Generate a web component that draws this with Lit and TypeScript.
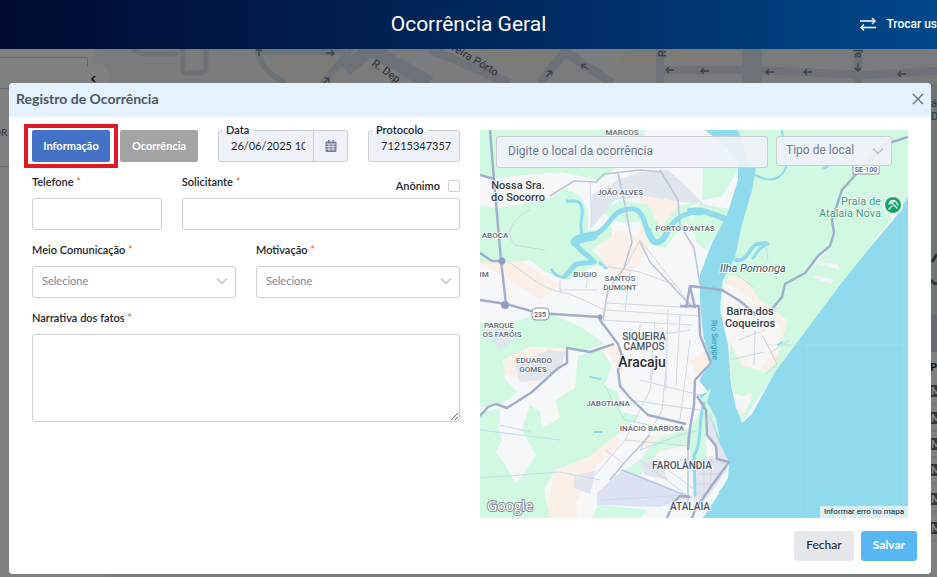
import { LitElement, html, svg, css } from "lit";
import { customElement } from "lit/decorators.js";

type Label = { t: string; x: number; y: number; c: string };

const labels: Label[] = [
  { t: "MARCOS", x: 622, y: 135, c: "small" },
  { t: "JOÃO ALVES", x: 620, y: 195, c: "small" },
  { t: "PORTO D'ANTAS", x: 685, y: 231, c: "small" },
  { t: "ABOCA", x: 495, y: 238, c: "small" },
  { t: "IM", x: 484, y: 277, c: "small" },
  { t: "BUGIO", x: 585, y: 277, c: "small" },
  { t: "SANTOS", x: 620, y: 281, c: "small" },
  { t: "DUMONT", x: 620, y: 290, c: "small" },
  { t: "PARQUE", x: 499, y: 328, c: "small" },
  { t: "OS FARÓIS", x: 502, y: 337, c: "small" },
  { t: "EDUARDO", x: 534, y: 363, c: "small" },
  { t: "GOMES", x: 533, y: 372, c: "small" },
  { t: "JABOTIANA", x: 608, y: 406, c: "small" },
  { t: "INÁCIO BARBOSA", x: 652, y: 431, c: "small" },
  { t: "SIQUEIRA", x: 644, y: 340, c: "medium" },
  { t: "CAMPOS", x: 644, y: 350, c: "medium" },
  { t: "FAROLÂNDIA", x: 682, y: 469, c: "medium" },
  { t: "ATALAIA", x: 690, y: 510, c: "medium" },
  { t: "Nossa Sra.", x: 518, y: 189, c: "town" },
  { t: "do Socorro", x: 518, y: 201, c: "town" },
  { t: "Barra dos", x: 750, y: 315, c: "town" },
  { t: "Coqueiros", x: 750, y: 327, c: "town" },
  { t: "Aracaju", x: 642, y: 367, c: "city" },
  { t: "Ilha Pomonga", x: 753, y: 272, c: "isle" },
  { t: "Praia de", x: 861, y: 205, c: "beach" },
  { t: "Atalaia Nova", x: 850, y: 217, c: "beach" },
];

const chevron = html`<svg class="chevron" viewBox="0 0 12 12" aria-hidden="true">
  <path d="M1.5 4 L6 8.5 L10.5 4" fill="none" stroke="currentColor" stroke-width="1.5" stroke-linecap="round" stroke-linejoin="round" />
</svg>`;

@customElement("city-map")
class CityMap extends LitElement {
  static styles = css`
    :host { display: block; }
    svg { display: block; width: 100%; height: auto; }
    text { font-family: Roboto, sans-serif; text-anchor: middle; fill: #4d5662; stroke: #fff; stroke-width: 2px; stroke-opacity: 0.7; paint-order: stroke; }
    .small { font-size: 8px; font-weight: 500; fill: #626b77; }
    .medium { font-size: 10px; font-weight: 500; }
    .town { font-size: 11px; font-weight: 500; fill: #353a42; }
    .city { font-size: 14px; font-weight: 500; fill: #2a2e34; }
    .isle { font-size: 11px; font-style: italic; font-weight: 400; }
    .beach { font-size: 11px; fill: #3d9c80; }
    .river-name { font-size: 8px; fill: #2f94ae; stroke: none; }
    .shield { font-size: 7px; font-weight: 500; }
    .credit { font-size: 8px; fill: #111; stroke: none; }
    .brand { font-family: "Open Sans", sans-serif; font-size: 14px; font-weight: 500; fill: #fff; stroke: #8b9298; stroke-width: 2px; stroke-opacity: 1; }
    .green { fill: #d1f8e1; }
    .sand { fill: #faf0e7; }
    .urban { fill: #e1e5ee; }
    .water { fill: #90daee; }
    .stream { fill: none; stroke: #90daee; stroke-linecap: round; stroke-linejoin: round; }
    .main { fill: none; stroke: #a0aecb; stroke-width: 2.4; stroke-linejoin: round; }
    .mid { fill: none; stroke: #bcc8d9; stroke-width: 1.6; stroke-linejoin: round; }
    .minor { fill: none; stroke: #cfd9e5; stroke-width: 1; }
    .creek { fill: none; stroke: #b4e4ea; stroke-width: 1; }
  `;
  render() {
    return html`<svg viewBox="480 130 428 388" role="img" aria-label="Mapa de Aracaju">
      <rect x="480" y="130" width="428" height="388" fill="#f6f7f9" />
      <path class="sand" d="M500 258 L520 260 L560 285 L540 300 L480 262Z M600 240 L620 230 L650 240 L640 265 L615 280 L600 262Z M640 190 L670 180 L680 200 L665 250 L640 240Z M500 372 C505 350 530 346 566 347 L560 366 L530 385 L510 375Z M612 346 L625 348 L622 375 L606 350Z M555 470 C575 455 600 450 615 432 L620 445 L590 472 L576 505 L578 518 L545 518Z M640 438 L690 430 L690 445 L650 455Z M690 360 L705 350 L710 365 L698 377Z"/>
      <path class="green" d="M480 130 L645 130 L640 150 L600 180 L560 172 L492 178 L480 176Z"/>
      <path class="green" d="M480 206 L500 208 L552 198 L566 188 L580 196 L588 210 L588 230 L612 226 L612 236 L592 250 L604 262 L590 268 L568 280 L545 272 L530 260 L508 262 L480 262Z"/>
      <path class="green" d="M600 212 L620 200 L648 205 L660 228 L678 206 L722 196 L738 170 L720 140 L703 168 L702 204 L735 210 L705 250 L694 240 L686 222 L664 248 L650 244 L640 222 L618 222Z"/>
      <path class="green" d="M480 322 C505 326 530 318 540 312 C565 318 590 330 604 344 L588 350 L566 348 L530 347 L503 360 L505 380 L518 392 L500 405 L480 407Z"/>
      <path class="green" d="M578 356 L602 350 L612 366 L604 386 L618 392 L622 412 L640 416 L628 426 L610 440 L590 456 L556 470 L544 490 L550 518 L480 518 L480 412 L500 408 L500 424 L522 430 L530 405 L540 412 L542 428 L560 418 L556 400 L575 388Z"/>
      <path class="green" d="M612 478 L640 460 L655 440 L690 428 L705 405 L707 470 L700 500 L692 470 L690 445 L660 450 L640 475 L620 480Z M592 518 L598 505 L648 510 L640 518Z"/>
      <path d="M498 424 L510 415 L528 405 L522 430 L536 455 L526 470 L516 484 L505 465 L496 452 L502 440Z" fill="#f6f7f9"/>
      <path class="urban" d="M592 195 L618 180 L640 172 L668 170 L690 190 L704 205 L670 200 L645 196 L615 200 L590 230Z M515 365 L548 350 L566 352 L560 368 L540 380 L520 382Z M482 330 L505 326 L520 335 L500 350Z M640 462 L660 460 L668 480 L645 475Z M695 462 L722 455 L728 468 L706 500 L694 500Z M574 476 L596 470 L590 494 L574 488Z M708 400 L722 440 L728 460 L718 458 L706 425Z"/>
      <path d="M597 493 L622 470 L690 497 L660 507 L597 505Z" fill="#dce2f4"/>
      <path d="M700 202 L688 208 L696 240 L690 270 L702 262 L702 285 L695 300 L690 280 L685 240Z" fill="#f6f7f9"/>
      <path class="green" d="M705 130 L908 130 L908 197 L780 365 L742 423 L730 400 L720 310 L722 280 L735 255 L756 170Z"/>
      <path class="sand" d="M728 276 L745 278 L760 300 L790 322 L785 350 L760 380 L742 415 L731 395 L722 340Z"/>
      <path d="M723 282 L740 290 L755 302 L775 318 L782 332 L775 352 L757 372 L740 356 L722 334Z" fill="#f7f6f5"/>
      <path class="green" d="M730 342 L742 366 L766 372 L764 390 L735 398 L731 380Z M790 310 L815 305 L800 335 L776 368 L764 385 L780 350Z"/>
      <path d="M731 393 L752 398 L745 413 L735 408Z M803 274 L806 267 L825 248 L828 252 L815 262 L838 264 L840 270 L812 262Z M815 275 L835 280 L830 284 L812 277Z" fill="#f3f5f6"/>
      <path class="water" d="M705 130 L738 130 L748 160 L756 168 L752 190 L742 225 L735 257 L722 282 L720 310 L728 345 L731 385 L736 408 L742 423 L752 414 L775 372 L810 325 L840 285 L868 250 L893 220 L908 197 V518 H703 L718 495 L728 478 L729 462 L718 440 L709 412 L699 395 L708 392 L699 380 L711 363 L703 335 L700 300 L700 275 L711 245 L727 215 L738 180 L738 163 L725 145 Z"/>
      <path class="green" d="M700 400 L711 388 L707 402 L716 418 L720 440 L709 412Z"/>
      <path class="stream" stroke-width="5" d="M576 240 C586 233 596 238 604 228 C612 220 614 210 630 209 C643 207 645 225 649 235 C656 250 664 240 668 230 C674 220 686 210 700 213"/>
      <path class="stream" stroke-width="6" d="M648 230 C655 252 664 240 668 230 M690 211 C705 209 714 215 726 219"/>
      <path class="stream" stroke-width="9" d="M575 242 C582 235 588 238 593 236"/>
      <path class="stream" stroke-width="3" d="M582 234 C578 222 586 212 580 203 C577 199 571 202 567 201 M606 268 L600 263"/>
      <path class="stream" stroke-width="5" d="M574 242 C580 252 588 254 594 262 L576 264 L566 275"/>
      <path class="stream" stroke-width="3" d="M566 277 C560 278 554 275 552 270"/>
      <path class="stream" stroke-width="4" d="M736 260 C748 262 748 248 757 244 L766 243"/>
      <path class="stream" stroke-width="3" d="M704 403 C698 420 702 445 694 455 L695 495 M753 258 C757 254 758 247 768 244"/>
      <path class="stream" stroke-width="2" d="M755 175 C772 184 782 178 786 167 L782 130 M590 377 L600 379 M594 432 L602 432 M778 345 L782 342 M720 492 L722 490 M824 168 L828 166"/>
      <path class="creek" d="M630 270 L625 310 M605 385 L612 400 L625 420 L650 425 M560 440 L480 430 M640 450 L680 435 L700 430 M737 275 L753 287 M770 353 L790 340 M766 244 L768 260"/>
      <path class="minor" d="M508 262 C530 275 540 290 570 294 L605 310 M605 310 L700 316 M607 303 L700 308 M560 290 L598 290 M600 320 L692 325 M624 270 L640 240 L648 250 L692 306 M598 265 L640 272 L675 285 M640 325 L638 350 M655 322 L650 380 M668 310 L666 390 M680 315 L676 385 M625 440 L650 390 L655 355 M640 450 L662 410 L667 360 M595 475 L625 440 L690 446 M640 380 L700 395 M630 400 L700 410 M690 330 L625 340 M605 450 L622 462 M690 340 L680 420 M480 478 L560 472 L600 480 M500 425 L530 432 M600 500 L690 495 M560 280 L560 292 M588 276 L586 288 M730 360 L764 352 M755 330 L754 365 M738 340 L765 330"/>
      <path class="minor" d="M530 210 C510 220 505 235 515 245 L545 250 M590 182 L592 225 M640 460 L700 505 M655 460 L695 490 M700 460 L725 464 M698 474 L722 474 M697 484 L715 484 M704 460 L704 496 M712 456 L710 490"/>
      <path class="mid" d="M550 196 L574 181 L596 182 L604 174 L640 170 L662 172 M618 173 L625 205 L632 242 L624 268 L608 290 L603 320 M660 170 L678 200 L680 225 L694 248 L700 285 M640 242 L650 262 L690 305 M610 480 L625 462 L650 435 M622 470 L660 485 L692 498 M688 435 L688 505"/>
      <path d="M766 374 L777 364 L770 350 L762 335" fill="none" stroke="#d9cbc9"/>
      <path class="main" d="M490 130 L494 180 L501 260 L506 305 M480 253 L492 261 L502 261 M480 300 L506 304 L538 313 L599 317 L603 325 M600 320 L618 344 L622 356 L618 370 L620 386 L630 398 L648 415 L686 424 M480 416 L488 407 L496 404 L507 408 L532 392 L557 369 L567 363 L567 348 L590 352 L614 344 M686 308 L690 286 L695 308 M680 306 L699 306 L700 335 L711 363 L695 380 L694 405 L690 428 L688 450 M690 286 L722 290 L740 301 L756 315 M772 309 L782 297 L785 284 L805 273 L818 256 L830 246 L834 233 L832 220 L842 190 L858 172 L870 160 L883 145 L908 137 M697 396 L706 410 L707 435 L716 446 L717 459 L729 462 L710 488 L695 510 L692 518 M667 518 L674 502 L680 496 L690 497 M480 175 L494 179"/>
      <g fill="#8f9fc3"><circle cx="502" cy="261" r="3.500"/><circle cx="505" cy="305" r="4"/><circle cx="600" cy="317" r="2.500"/></g>
      <g stroke="#aee0ef" opacity=".6"><path d="M807 345 V518 M766 345 H908 M903 210 V518"/></g>
      ${labels.map((l) => svg`<text class=${l.c} x=${l.x} y=${l.y}>${l.t}</text>`)}
      <text class="river-name" transform="translate(712 340) rotate(88)">Rio Sergipe</text>
      <rect x="532" y="308" width="17" height="12" rx="4" fill="#fff" stroke="#8b95a5" />
      <text class="shield" x="540" y="317">235</text>
      <rect x="853" y="165" width="26" height="9" fill="#fff" stroke="#8b95a5" />
      <text class="shield" x="866" y="172">SE-100</text>
      <path d="M893 219 L886 211 A9.500 9.500 0 1 1 901 211 Z" fill="#fff"/>
      <circle cx="893" cy="205" r="8" fill="#16a46b"/>
      <g fill="none" stroke="#fff" stroke-width="1.2" stroke-linecap="round"><path d="M889 204 A4 4 0 0 1 895 201 Z M892 203 L897 208 M889 209 L892 206 M896 202 L898 205"/></g>
      <text class="brand" x="510" y="511">Google</text>
      <rect x="820" y="506" width="88" height="12" fill="#d9f0f7"/>
      <text class="credit" x="864" y="514">Informar erro no mapa</text>
    </svg>`;
  }
}

@customElement("street-backdrop")
class StreetBackdrop extends LitElement {
  static styles = css`
    :host { display: block; overflow: hidden; }
    svg { display: block; width: 100%; height: 100%; }
    text { font-family: Roboto, sans-serif; font-size: 11px; font-weight: 500; fill: #383c3f; }
    .poi { fill: #1f4f3f; }
    .head { font-family: Lato, sans-serif; font-weight: 900; fill: #111; }
    .badge { font-family: Lato, sans-serif; font-weight: 900; fill: #8a8a8a; }
    .road { fill: none; stroke: #6c7277; stroke-linejoin: round; }
    .side { font-family: Lato, sans-serif; font-weight: 400; font-size: 10px; fill: #333; }
  `;
  render() {
    const arrow = (x: number, y: number, r: number) => svg`<path transform="translate(${x} ${y}) rotate(${r})" d="M4 0 H-4 M-1 -3 L-4 0 L-1 3" fill="none" stroke="#3c4246" stroke-width="1.4"/>`;
    return html`<svg viewBox="0 49 937 528" preserveAspectRatio="xMidYMin slice" aria-hidden="true">
      <rect y="49" width="937" height="528" fill="#797b7c" />
      <path d="M265 49 L330 49 L350 83 H285Z M480 49 H560 L545 65 L500 60Z M620 49 H655 V64 H620Z M670 49 H735 V62 H670Z" fill="#7c7a77"/>
      <path class="road" stroke-width="5" d="M132 49 L142 54 H178 M183 49 V70 Q183 73 187 73 H202 Q206 73 206 69 V49"/>
      <path class="road" stroke-width="6" d="M258 49 C258 65 270 75 285 83 M258 52 H345 M322 83 L352 49"/>
      <path class="road" stroke-width="14" d="M345 70 L370 49 L430 83"/>
      <path class="road" stroke-width="9" d="M430 49 L510 83 M540 83 L565 52 L612 83"/>
      <path class="road" stroke-width="8" d="M660 49 V83 M660 70 L750 70 L865 75 L937 71 M858 49 V83"/>
      <path class="road" stroke-width="20" d="M752 49 V83"/>
      <path d="M0 49 H95 L92 64 H102 Q110 68 110 83 V577 H0Z" fill="#808080"/>
      <path d="M0 57.500 H87.500 V66 M0 88.500 H87 M0 166.500 H30" fill="none" stroke="#62656a"/>
      <path d="M95 76 L92 79 L95 82" fill="none" stroke="#111" stroke-width="1.6"/>
      <text class="side" x="-7" y="136">OR</text>
      <text transform="translate(371 65) rotate(35)">R. Dep.</text>
      <text transform="translate(440 43) rotate(31)">Pereira Pórto</text>
      <text transform="translate(666 57) rotate(-90)">R</text>
      <text transform="translate(861 58) rotate(-90)">aju</text>
      ${arrow(259, 52, 90)}${arrow(330, 53, 180)}${arrow(326, 81, 135)}
      ${arrow(549, 74, 130)}${arrow(585, 67, 35)}${arrow(670, 70, 0)}${arrow(705, 71, 0)}
      ${arrow(770, 72, 0)}${arrow(808, 72, 0)}${arrow(858, 67, -90)}${arrow(902, 74, 0)}
      <rect x="925" y="83" width="12" height="232" fill="#707578"/>
      <text class="poi" x="931" y="107">á</text><text class="poi" x="931" y="120">D</text>
      <path d="M932 262 L937 254 M931 280 Q934 285 937 283" stroke="#2f3335" stroke-width="3" fill="none"/>
      <rect x="925" y="315" width="12" height="37" fill="#686b75"/>
      <rect x="925" y="352" width="12" height="225" fill="#7f7f7f"/>
      <text class="head" x="930" y="371">P</text>
      ${[385, 412, 438, 464, 493, 522].map((y) => svg`<rect x="925" y=${y} width="12" height="12" fill="#353535"/><text class="badge" x="931" y=${y + 10}>M</text><path d="M925 ${y + 19} H937" stroke="#707070"/>`)}
    </svg>`;
  }
}

@customElement("app-root")
class AppRoot extends LitElement {
  static styles = css`
    :host { display: block; font-family: Lato, sans-serif; font-size: 11px; line-height: 16px; color: #22262c; }
    * { box-sizing: border-box; }
    .page { display: flex; flex-direction: column; min-height: 100vh; overflow: hidden; background: #808080; }
    .bar { display: grid; grid-template-columns: 1fr auto 1fr; align-items: center; height: 49px; padding-bottom: 2px; color: #fff; font-family: Roboto, sans-serif; background: linear-gradient(90deg, #000a31, #00265a 50%, #00488b); }
    .bar h1 { grid-column: 2; margin: 0; font-size: 21px; line-height: 28px; font-weight: 400; }
    .swap { justify-self: end; display: flex; align-items: center; gap: 9px; padding: 0; border: 0; background: none; color: inherit; font: 500 12px/16px Roboto, sans-serif; white-space: nowrap; }
    .swap svg { width: 18px; height: 14px; }
    .stage { position: relative; flex: 1; padding: 34px 6px 3px 9px; }
    .backdrop { position: absolute; inset: 0; }
    .modal { position: relative; border-radius: 4px; background: #fff; }
    .title { display: flex; align-items: center; justify-content: space-between; height: 34px; padding: 0 7px 2px; border-radius: 4px 4px 0 0; background: #e5f1fd; }
    .title h2 { margin: 0; font-size: 14px; line-height: 20px; font-weight: 700; color: #4c565f; }
    .close { width: 12px; height: 12px; padding: 0; border: 0; background: none; color: #6b747d; }
    .close svg { display: block; width: 12px; height: 12px; }
    .content { display: grid; grid-template-columns: 1fr 1fr; gap: 20px; padding: 13px 23px; }
    form { display: flex; flex-direction: column; gap: 12px; min-width: 0; }
    .row { display: grid; gap: 20px; }
    .top { grid-template-columns: 166px 130fr 92fr; }
    .split { grid-template-columns: 7fr 15fr; }
    .half { grid-template-columns: 1fr 1fr; }
    .tabs { display: grid; grid-template-columns: 1fr 1fr; gap: 10px; }
    .tab { position: relative; padding: 0; border: 0; border-radius: 2px; background: #a4a4a4; color: #fff; font: 700 11px/16px Lato, sans-serif; }
    .tab.active { background: #4472c7; }
    .tab.active::after { content: ""; position: absolute; inset: -6px -8px; border: 4px solid #de1a26; }
    .field { display: flex; flex-direction: column; min-width: 0; }
    .caption { display: flex; justify-content: space-between; height: 24px; font-weight: 600; }
    .req { color: #f0703a; }
    input, select, textarea { display: block; width: 100%; min-width: 0; margin: 0; border: 1px solid #cbced2; border-radius: 3px; background: #fff; color: #22262c; font: 400 11px/16px Lato, sans-serif; outline: 0; }
    input, select { height: 32px; padding: 0 8px 2px 12px; }
    textarea { height: 88px; padding: 8px; resize: vertical; }
    select { appearance: none; padding: 0 9px 2px; color: #7c8495; }
    .pick { position: relative; }
    .chevron { position: absolute; right: 8px; top: 9px; width: 12px; height: 12px; color: #bfc4ca; pointer-events: none; }
    .check { display: flex; align-items: center; gap: 8px; }
    .check input { appearance: none; width: 12px; height: 12px; padding: 0; border-radius: 2px; }
    .float { position: relative; display: flex; }
    .float label { position: absolute; left: 4px; top: -8px; padding: 0 4px; background: linear-gradient(#fff 9px, #eef1f7 9px); font-weight: 600; }
    .float input { background: #eef1f7; }
    .float .date { flex: 1; border-radius: 3px 0 0 3px; }
    .cal { flex: none; width: 34px; padding: 0; border: 1px solid #cbced2; border-left: 0; border-radius: 0 3px 3px 0; background: #eef1f7; color: #787d9b; }
    .cal svg { display: block; width: 12px; height: 12px; margin: auto; }
    .map { position: relative; }
    .search { position: absolute; inset: 6px 16px auto 16px; display: grid; grid-template-columns: 272fr 116fr; gap: 8px; align-items: start; }
    .search input, .search select { background: rgba(238, 241, 247, 0.93); color: #737b8c; font-family: Roboto, sans-serif; font-size: 12px; }
    .search input { padding-left: 11px; }
    .search select { height: 30px; }
    .search input::placeholder { color: #737b8c; }
    .actions { display: flex; justify-content: flex-end; gap: 7px; padding: 0 14px 13px; }
    .btn { height: 30px; padding: 0 12px 2px; border: 0; border-radius: 3px; background: #e6e7eb; color: #22262c; font: 500 12px/16px Lato, sans-serif; }
    .btn.save { background: #56b8f2; color: #fff; font-weight: 700; }
  `;
  render() {
    const req = html`<span class="req">*</span>`;
    return html`<div class="page">
      <header class="bar">
        <h1>Ocorrência Geral</h1>
        <button class="swap">
          <svg viewBox="0 0 18 14" fill="none" stroke="currentColor" stroke-width="1.4" aria-hidden="true"><path d="M1 4 H16 M13 1 L16 4 L13 7 M17 10.500 H2 M5 7.500 L2 10.500 L5 13.500"/></svg>
          <span>Trocar us</span>
        </button>
      </header>
      <main class="stage">
        <street-backdrop class="backdrop"></street-backdrop>
        <section class="modal" role="dialog" aria-labelledby="dialog-title">
          <div class="title">
            <h2 id="dialog-title">Registro de Ocorrência</h2>
            <button class="close" aria-label="Cancelar"><svg viewBox="0 0 12 12"><path d="M1 1 L11 11 M11 1 L1 11" stroke="currentColor" stroke-width="1.4"/></svg></button>
          </div>
          <div class="content">
            <form>
              <div class="row top">
                <div class="tabs">
                  <button type="button" class="tab active">Informação</button>
                  <button type="button" class="tab">Ocorrência</button>
                </div>
                <div class="float">
                  <input id="date" class="date" value="26/06/2025 10:32" readonly />
                  <label for="date">Data</label>
                  <button type="button" class="cal" aria-label="Calendário">
                    <svg viewBox="0 0 12 12" aria-hidden="true"><path d="M3 0 H4.500 V1.500 H7.500 V0 H9 V1.500 H10.500 Q11.500 1.500 11.500 2.500 V11 Q11.500 12 10.500 12 H1.500 Q.5 12 .5 11 V2.500 Q.5 1.500 1.500 1.500 H3Z" fill="currentColor"/><path d="M1.500 4 H10.500 M1.500 6.500 H10.500 M1.500 9 H10.500 M4 4 V11 M8 4 V11" stroke="#eef1f7" stroke-width=".8"/></svg>
                  </button>
                </div>
                <div class="float">
                  <input id="protocol" value="71215347357" readonly />
                  <label for="protocol">Protocolo</label>
                </div>
              </div>
              <div class="row split">
                <div class="field">
                  <div class="caption"><label for="phone">Telefone ${req}</label></div>
                  <input id="phone" type="tel" />
                </div>
                <div class="field">
                  <div class="caption"><label for="requester">Solicitante ${req}</label>
                    <label class="check">Anônimo <input type="checkbox" /></label></div>
                  <input id="requester" />
                </div>
              </div>
              <div class="row half">
                <div class="field">
                  <div class="caption"><label for="channel">Meio Comunicação ${req}</label></div>
                  <div class="pick"><select id="channel"><option>Selecione</option></select>${chevron}</div>
                </div>
                <div class="field">
                  <div class="caption"><label for="reason">Motivação ${req}</label></div>
                  <div class="pick"><select id="reason"><option>Selecione</option></select>${chevron}</div>
                </div>
              </div>
              <div class="field">
                <div class="caption"><label for="story">Narrativa dos fatos ${req}</label></div>
                <textarea id="story"></textarea>
              </div>
            </form>
            <div class="map">
              <city-map></city-map>
              <div class="search">
                <input aria-label="Local" placeholder="Digite o local da ocorrência" />
                <div class="pick"><select aria-label="Tipo de local"><option>Tipo de local</option></select>${chevron}</div>
              </div>
            </div>
          </div>
          <div class="actions">
            <button class="btn">Fechar</button>
            <button class="btn save">Salvar</button>
          </div>
        </section>
      </main>
    </div>`;
  }
}
